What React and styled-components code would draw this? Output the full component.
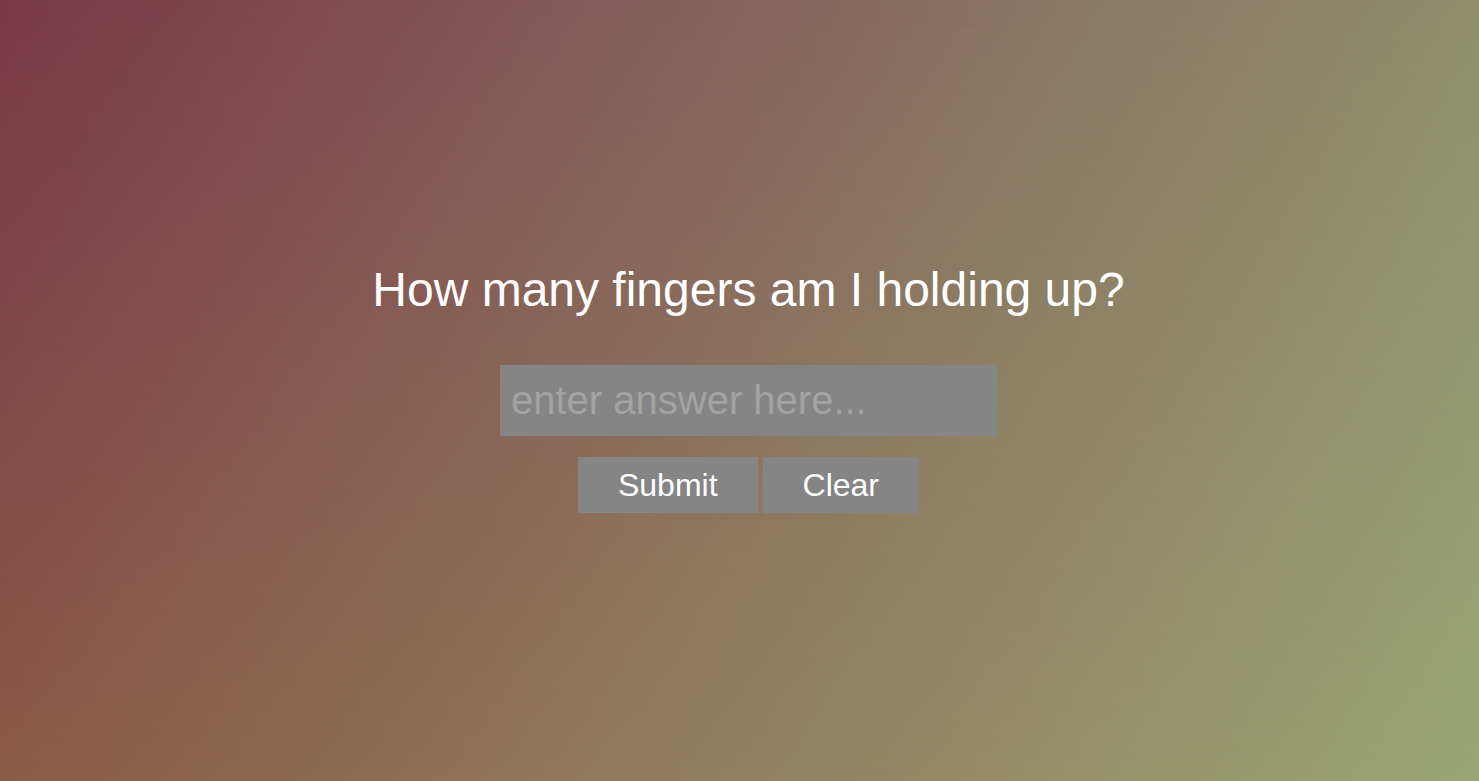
import React from "react";
import styled, { createGlobalStyle } from "styled-components";

const GlobalStyle = createGlobalStyle`
    html, body {
        margin: 0;
        padding: 0;
        height: 100%;
    }
    body {
        font-family: "Liberation Sans", Arial, sans-serif;
    }
`;

/* bottom edge colours as the base, top edge colours faded in over it */
const Page = styled.div`
    position: relative;
    width: 100%;
    height: 781px;
    box-sizing: border-box;
    padding-left: 18px;
    display: flex;
    flex-direction: column;
    align-items: center;
    background: linear-gradient(to right, #8a5a48 0%, #918060 49%, #9aa673 100%);
    &::before {
        content: "";
        position: absolute;
        inset: 0;
        background: linear-gradient(to right, #7a3848 0%, #85635c 49%, #8e8e6e 100%);
        -webkit-mask-image: linear-gradient(to bottom, #000, transparent);
        mask-image: linear-gradient(to bottom, #000, transparent);
    }
`;

const Content = styled.div`
    position: relative;
    display: flex;
    flex-direction: column;
    align-items: center;
`;

const Title = styled.h1`
    margin: 258px 0 0;
    font-size: 48px;
    font-weight: 400;
    line-height: 64px;
    color: #fff;
`;

const AnswerInput = styled.input`
    margin-top: 43px;
    width: 497px;
    height: 71px;
    box-sizing: border-box;
    padding: 0 11px;
    border: none;
    outline: none;
    background: #858585;
    color: #fff;
    font-family: "Liberation Sans", Arial, sans-serif;
    font-size: 40px;
    &::placeholder {
        color: #a3a3a3;
    }
`;

const ButtonRow = styled.div`
    margin-top: 21px;
    display: flex;
    gap: 5px;
`;

const Button = styled.button`
    height: 56px;
    padding: 0 40px;
    border: none;
    background: #858585;
    color: #fff;
    font-family: "Liberation Sans", Arial, sans-serif;
    font-size: 32px;
    cursor: pointer;
`;

const App = () => {
    return (
        <>
            <GlobalStyle />
            <Page>
                <Content>
                    <Title>How many fingers am I holding up?</Title>
                    <AnswerInput placeholder="enter answer here..." />
                    <ButtonRow>
                        <Button>Submit</Button>
                        <Button>Clear</Button>
                    </ButtonRow>
                </Content>
            </Page>
        </>
    );
};

export default App;
